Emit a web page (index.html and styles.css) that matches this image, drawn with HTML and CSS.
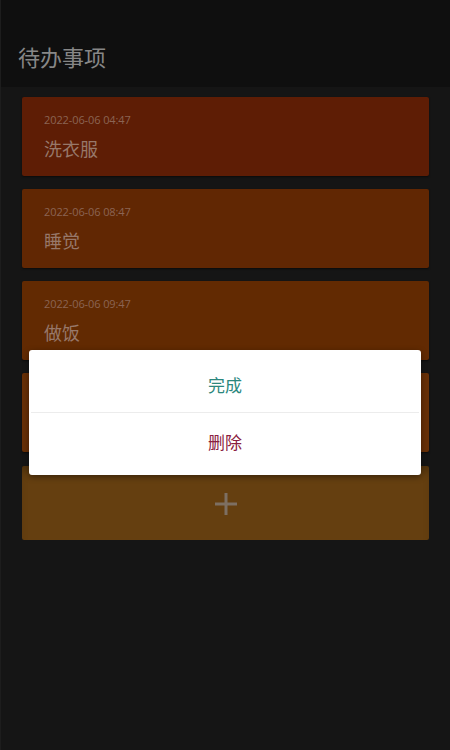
FILE: index.html
```html
<!DOCTYPE html>
<html lang="zh">
<head>
<meta charset="utf-8">
<link rel="stylesheet" href="styles.css">
</head>
<body>
<div class="screen">
  <header class="topbar"><h1 class="title">待办事项</h1></header>
  <main class="list">
    <div class="card c1"><div class="date">2022-06-06 04:47</div><div class="name">洗衣服</div></div>
    <div class="card c2"><div class="date">2022-06-06 08:47</div><div class="name">睡觉</div></div>
    <div class="card c3"><div class="date">2022-06-06 09:47</div><div class="name">做饭</div></div>
    <div class="card c4"><div class="date">2022-06-06 10:47</div><div class="name">看书</div></div>
    <div class="add-card">
      <svg class="plus" width="24" height="24" viewBox="0 0 24 24"><path d="M12 1v22M1 12h22" stroke="#7d6f62" stroke-width="3" fill="none"/></svg>
    </div>
  </main>
  <div class="dialog">
    <div class="action done">完成</div>
    <div class="divider"></div>
    <div class="action del">删除</div>
  </div>
</div>
</body>
</html>
```
FILE: styles.css
```css
* { box-sizing: border-box; }
html, body { margin: 0; padding: 0; background: #151515; }
body { font-family: "Noto Sans CJK SC", "Noto Sans", sans-serif; }
.screen { position: relative; width: 450px; height: 750px; background: #151515; overflow: hidden; border-left: 1px solid #1d1d1d; }
.topbar { height: 87px; background: #0f0f0f; display: flex; align-items: flex-end; padding: 0 0 16px 17px; }
.title { margin: 0; font-size: 22px; font-weight: 400; color: #878787; line-height: 30px; }
.list { display: flex; flex-direction: column; gap: 13px; padding: 10px 21px 0 21px; }
.card { height: 79px; border-radius: 2px; padding: 15px 22px 0 22px; box-shadow: 0 1px 2px rgba(0,0,0,0.5); }
.c1 { background: #5e1d05; }
.c2 { background: #612703; }
.c3 { background: #622a02; }
.c4 { background: #672f06; }
.date { font-family: "Open Sans", "Noto Sans", sans-serif; font-size: 11px; line-height: 16px; color: #8b6453; letter-spacing: -0.1px; }
.name { margin-top: 8px; font-size: 18px; line-height: 24px; color: #97786a; }
.add-card { height: 74px; margin-top: 1px; border-radius: 2px; background: #653f10; display: flex; align-items: center; justify-content: center; box-shadow: inset 0 8px 10px -4px rgba(0,0,0,0.25); }
.plus { display: block; margin-top: 1px; }
.dialog { position: absolute; left: 28px; top: 350px; width: 392px; height: 125px; background: #ffffff; border-radius: 3px; display: flex; flex-direction: column; box-shadow: 0 2px 6px rgba(0,0,0,0.4); }
.action { height: 62px; display: flex; align-items: center; justify-content: center; font-size: 17px; }
.divider { height: 1px; background: #ececec; margin: 0 2px; }
.done { color: #2b877d; padding-top: 7px; }
.del { color: #8a2040; padding-bottom: 5px; }
```
